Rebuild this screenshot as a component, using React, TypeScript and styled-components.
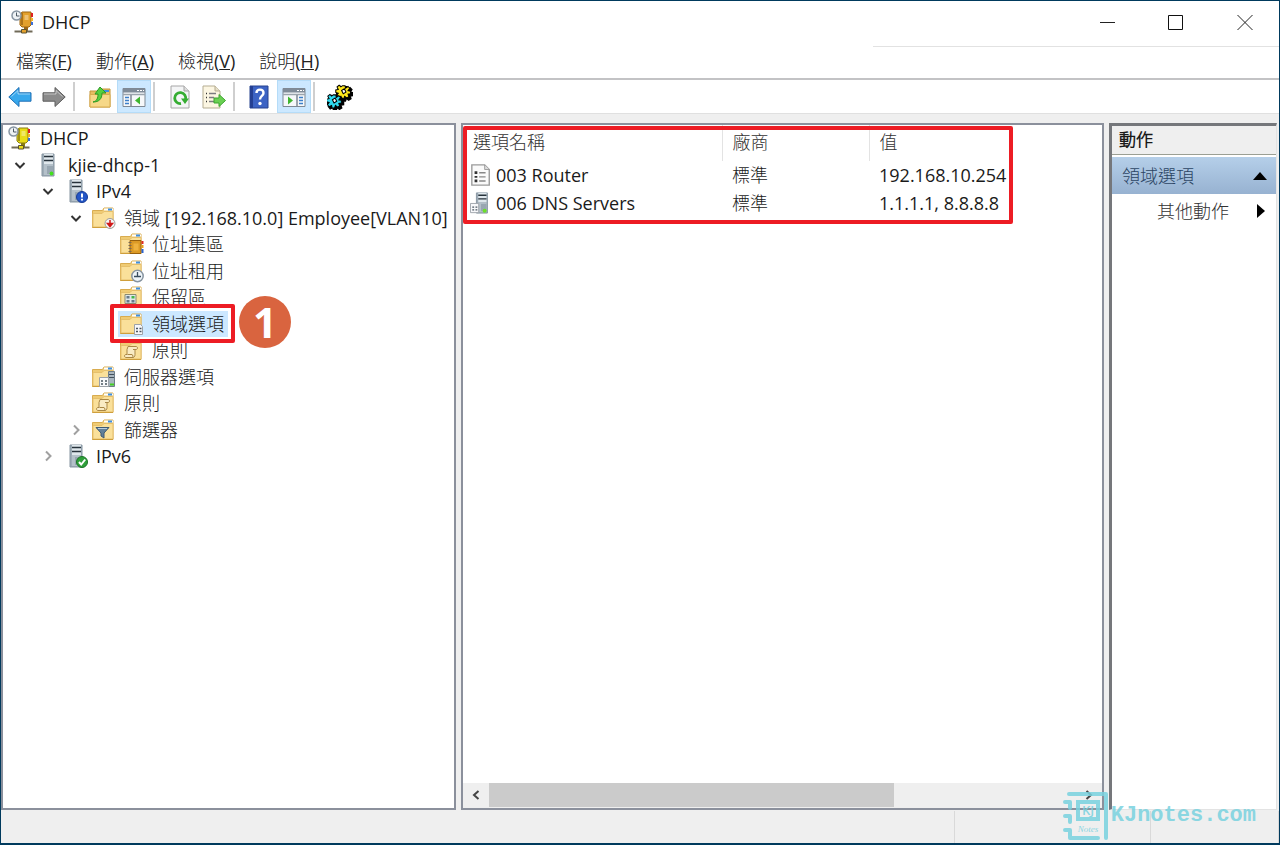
import React from "react";
import styled, { createGlobalStyle, css } from "styled-components";

const GlobalStyle = createGlobalStyle`
  *, *::before, *::after { box-sizing: border-box; }
  body {
    margin: 0;
    background: #efefef;
    color: #1a1a1a;
    font-family: "Open Sans", "Noto Sans CJK TC Light", "Noto Sans CJK TC DemiLight", "Noto Sans CJK TC", sans-serif;
    font-size: 18px;
    line-height: 26px;
  }
  button {
    font: inherit;
    color: inherit;
    border: 0;
    padding: 0;
    background: transparent;
  }
  svg { display: block; flex: none; }
`;

const Window = styled.div`
  display: flex;
  flex-direction: column;
  min-height: 100vh;
  border: 1px solid #003a5d;
  border-bottom-width: 2px;
`;

/* ---------- title and menu ---------- */

const TitleBar = styled.header`
  display: flex;
  align-items: center;
  justify-content: space-between;
  height: 45px;
  padding: 0 0 3px 10px;
  background: #fff;
`;

const Title = styled.h1`
  display: flex;
  align-items: center;
  gap: 7px;
  margin: 0;
  font-size: 18px;
  font-weight: 400;
`;

const Captions = styled.div`
  display: flex;
  align-self: stretch;
`;

const CaptionButton = styled.button`
  display: flex;
  align-items: center;
  justify-content: center;
  width: 69px;
`;

const MenuBar = styled.nav`
  display: flex;
  gap: 24px;
  height: 32px;
  padding: 1px 15px 0;
  background: linear-gradient(#e2e2e2, #e2e2e2) right top / 406px 1px no-repeat #fff;
`;

const MenuButton = styled.button`
  height: 28px;
  color: #222;
`;

/* ---------- toolbar ---------- */

const Toolbar = styled.div`
  display: flex;
  height: 36px;
  padding-left: 2px;
  border-top: 2px solid #c3c3c5;
  border-bottom: 1px solid #e0e0e0;
  background: #fff;
`;

const ToolButton = styled.button<{ $on?: boolean }>`
  display: flex;
  align-items: center;
  justify-content: center;
  width: 34px;
  ${(p) =>
    p.$on &&
    css`
      background: #cce8ff;
      border: 1px solid #b5dcf8;
    `}
`;

const ToolDivider = styled.span`
  width: 2px;
  margin: 2px 8px 2px 2px;
  background: #cfcfcf;
`;

/* ---------- panels ---------- */

const Panels = styled.main`
  flex: 1;
  display: grid;
  grid-template-columns: 455px minmax(0, 1fr) 168px;
  gap: 5px;
  padding: 9px 2px 0 0;
`;

const Panel = styled.section`
  display: flex;
  flex-direction: column;
  min-width: 0;
  background: #fff;
  border: 2px solid #8b909c;
`;

const ActionPanel = styled(Panel)`
  border-width: 3px 1px 1px 3px;
  border-color: #75777b #e3e3e3 #e3e3e3 #75777b;
`;

/* ---------- tree ---------- */

const Tree = styled.ul`
  margin: 0;
  padding: 0;
  list-style: none;
`;

const TreeItem = styled.li<{ $level: number }>`
  position: relative;
  display: flex;
  align-items: center;
  height: 26px;
  padding-left: ${(p) => (p.$level === 0 ? 5 : p.$level * 28 - 23)}px;

  &:nth-child(even) { height: 27px; }
`;

const Toggle = styled.button`
  display: flex;
  align-items: center;
  justify-content: center;
  width: 24px;
  height: 24px;
  margin-right: 4px;
`;

const TogglePlaceholder = styled.span`
  width: 28px;
`;

const NodeLabel = styled.button<{ $selected?: boolean }>`
  display: flex;
  align-items: center;
  gap: 8px;
  height: 26px;
  padding-right: 4px;
  white-space: nowrap;
  ${(p) =>
    p.$selected &&
    css`
      background: #cce8ff;
      box-shadow: -2px 0 #cce8ff;
    `}
`;

const RedFrame = styled.div`
  position: absolute;
  z-index: 2;
  border: 4px solid #ed1c24;
  border-radius: 2px;
  pointer-events: none;
`;

const TreeFrame = styled(RedFrame)`
  top: -6px;
  left: 107px;
  width: 125px;
  height: 39px;
`;

const ListFrame = styled(RedFrame)`
  top: 1px;
  left: 0;
  width: 550px;
  height: 98px;
`;

const StepBadge = styled.span`
  position: absolute;
  z-index: 3;
  top: -14px;
  left: 236px;
  display: flex;
  align-items: center;
  justify-content: center;
  width: 52px;
  height: 52px;
  border-radius: 50%;
  background: #d9643f;
  color: #fff;
  font-size: 42px;
  font-weight: 700;
`;

/* ---------- option list ---------- */

const ListArea = styled.div`
  position: relative;
  flex: 1;
`;

const OptionTable = styled.table`
  width: 100%;
  table-layout: fixed;
  border-collapse: collapse;
  text-align: left;
  white-space: nowrap;

  th {
    height: 36px;
    padding: 0 0 2px 10px;
    font-weight: 400;
    color: #333;
    border-right: 1px solid #e3e3e3;
  }
  th:last-child { border-right: 0; }
  td {
    height: 28px;
    padding: 0 0 0 10px;
  }
  td:first-child { padding-left: 7px; }
`;

const OptionName = styled.span`
  display: flex;
  align-items: center;
  gap: 4px;
`;

const ScrollBar = styled.div`
  display: flex;
  height: 25px;
  padding-bottom: 1px;
  background: #efefef;
`;

const ScrollButton = styled.button`
  display: flex;
  align-items: center;
  justify-content: center;
  width: 26px;
`;

const ScrollTrack = styled.div`
  flex: 1;
`;

const ScrollThumb = styled.div`
  width: 69%;
  height: 100%;
  background: #cbcbcb;
`;

/* ---------- actions ---------- */

const ActionTitle = styled.h2`
  height: 29px;
  margin: 0;
  padding-left: 7px;
  font-size: 17px;
  font-weight: 700;
  line-height: 28px;
  background: #efefef;
  border-bottom: 1px solid #9b9f94;
`;

const ActionGroup = styled.button`
  display: flex;
  align-items: center;
  justify-content: space-between;
  height: 37px;
  margin-top: 2px;
  padding: 0 9px 0 10px;
  color: #2c4564;
  background: linear-gradient(#b5cfe9, #97b2d1);
`;

const ActionItem = styled.button`
  display: flex;
  align-items: center;
  justify-content: space-between;
  height: 34px;
  padding: 0 11px 0 45px;
  color: #333;
`;

/* ---------- status bar ---------- */

const StatusBar = styled.footer`
  position: relative;
  display: grid;
  grid-template-columns: minmax(0, 1fr) 196px 128px;
  height: 33px;
  padding-top: 1px;
`;

const StatusCell = styled.span`
  border-right: 1px solid #d9d9d9;
`;

const Watermark = styled.div`
  position: absolute;
  z-index: 4;
  right: 23px;
  bottom: 1px;
  display: flex;
  align-items: center;
  color: #79d2df;
  opacity: 0.85;
  font: 700 22px/30px "Liberation Mono", monospace;
`;

/* ---------- drawings ---------- */

const Svg = ({ size = 24, children }: { size?: number; children: React.ReactNode }) => (
  <svg width={size} height={size} viewBox="0 0 24 24" aria-hidden="true">
    {children}
  </svg>
);

const DhcpIcon = ({ body, edge }: { body: string; edge: string }) => (
  <Svg>
    <path d="M9 5l2-3h9v13l-2 2h-7l-2-2z" fill={body} stroke={edge} />
    <path d="M11 3v12" stroke={edge} strokeWidth="1.500" />
    <path d="M13.500 5h4v5h-4z" fill="#fff" fillOpacity=".35" />
    <path d="M20 3h2v4h-2z" fill="#e02020" />
    <path d="M20 8h2v3h-2z" fill="#f0b428" />
    <path d="M20 12h2v3h-2z" fill="#3a6fd8" />
    <path d="M13 17h4v4h-4z" fill={edge} />
    <path d="M3.500 21.500h18" stroke="#706a58" strokeWidth="2" />
    <path d="M10.500 19.500h5v3.500h-5z" fill={body} stroke="#5b5330" />
    <circle cx="5.500" cy="5.500" r="4.500" fill="#eef2f5" stroke="#8795a2" strokeWidth="1.500" />
    <path d="M5.500 2.500v3.500h3" fill="none" stroke="#4c5964" />
  </Svg>
);

const Tower = ({ x = 5 }: { x?: number }) => (
  <g transform={`translate(${x} 0)`}>
    <path d="M1 1h12v22H1z" fill="#9eacb7" stroke="#8695a1" />
    <path d="M3 1h9v10H3z" fill="#dfe7ec" />
    <path d="M3 11h9v11H3z" fill="#b4c0c9" />
    <path d="M3 3.500h9M3 7.500h9" stroke="#27323b" strokeWidth="1.500" />
    <path d="M6 13h6v8H6z" fill="#98a6b1" />
  </g>
);

const ServerIcon = () => (
  <Svg>
    <Tower />
    <circle cx="15.500" cy="20.500" r="1.900" fill="#43e01c" />
  </Svg>
);

const ServerInfoIcon = () => (
  <Svg>
    <Tower />
    <circle cx="18" cy="18" r="5.500" fill="#2456c6" stroke="#173c96" />
    <path d="M18 14.500v4M18 19.800v1.700" stroke="#fff" strokeWidth="2" />
  </Svg>
);

const ServerOkIcon = () => (
  <Svg>
    <Tower />
    <circle cx="18" cy="18" r="5.500" fill="#2fa03a" stroke="#1c7427" />
    <path d="M15 18l2.200 2.500 4-5" fill="none" stroke="#fff" strokeWidth="2" />
  </Svg>
);

const Folder = () => (
  <>
    <path d="M.500 4.500h10l1.500-2.500h9v19.500H.500z" fill="#efcb74" stroke="#d9ac50" />
    <path d="M12 3.500h9" stroke="#fff" strokeWidth="2" />
    <path d="M16 3.500h4" stroke="#3f8fe0" strokeWidth="2" />
    <path d="M1 7.500h9l2-2h9v15.500H1z" fill="#fae09a" stroke="#e6c06c" />
    <path d="M.500 21.500h20.500" stroke="#cf9f3c" />
  </>
);

const FolderIcon = ({ children }: { children?: React.ReactNode }) => (
  <Svg>
    <Folder />
    {children}
  </Svg>
);

const ScopeBadge = () => (
  <>
    <circle cx="18" cy="17.500" r="5" fill="#f4f4f4" stroke="#9b9b9b" />
    <path d="M18 14v6M15.500 17.500L18 20.500l2.500-3z" fill="#d01818" stroke="#d01818" strokeWidth="1.500" />
  </>
);

const BookBadge = () => (
  <>
    <path d="M10 8.500h11v13H10z" fill="#dc9a26" stroke="#99610c" />
    <path d="M8.500 10.500h3M8.500 13.500h3M8.500 16.500h3M8.500 19.500h3" stroke="#7b6a55" />
    <path d="M13.500 11.500h5v7h-5z" fill="#efb23e" />
    <path d="M22.500 9v3" stroke="#e02a20" strokeWidth="2" />
    <path d="M22.500 13v3" stroke="#e8a11c" strokeWidth="2" />
    <path d="M22.500 17v4" stroke="#2b63cf" strokeWidth="2" />
  </>
);

const ClockBadge = () => (
  <>
    <circle cx="17.500" cy="17" r="5.700" fill="#eef4f8" stroke="#8794a0" strokeWidth="1.500" />
    <path d="M17.500 13v4.500h3.500M14 17.500h3" fill="none" stroke="#394d5e" strokeWidth="1.300" />
  </>
);

const ReserveBadge = () => (
  <>
    <path d="M5 9.500h11v9H5z" fill="#dfe8ea" stroke="#8a8a72" />
    <path d="M6.500 11h3v2.500h-3zM6.500 15h3v2.500h-3zM11.500 15h3v2.500h-3z" fill="#66798a" />
    <path d="M11.500 11h3v2.500h-3z" fill="#42b649" />
  </>
);

const ListBadge = () => (
  <>
    <path d="M14.500 12.500h6l2 2v8h-8z" fill="#f7f8fa" stroke="#9da2a8" />
    <path d="M16 16.500h2M19.500 16.500h2M16 19.500h2M19.500 19.500h2" stroke="#4a5560" strokeWidth="1.500" />
  </>
);

const PolicyBadge = () => (
  <>
    <path d="M8 8.500h8c2 0 2 3 0 3h-1v5c0 2-1 3-2 3H6c-2 0-2-3 0-3h1v-5z" fill="#f9ebc4" stroke="#a98746" />
    <path d="M13 11.500h2M7.500 16.500h4.500c1 0 1 3 1 3" fill="none" stroke="#a98746" />
  </>
);

const ServerListBadge = () => (
  <>
    <path d="M16.500 6.500h6v15h-6z" fill="#a9b6c0" stroke="#6e7d88" />
    <path d="M17 9.500h5M17 12.500h5" stroke="#43505b" />
    <path d="M18 19.500h4" stroke="#43d022" strokeWidth="2" />
    <path d="M7.500 12.500h9v9h-9z" fill="#f7f8fa" stroke="#9da2a8" />
    <path d="M9 16h2M13 16h2M9 19h2M13 19h2" stroke="#4a5560" strokeWidth="1.500" />
  </>
);

const FunnelBadge = () => (
  <>
    <path d="M4 9.500h13l-5 5.500v5l-3-2v-3z" fill="#62809a" stroke="#405b74" />
    <path d="M6 10.500h9" stroke="#b9cddd" />
  </>
);

const Chevron = ({ open }: { open: boolean }) => (
  <svg width="12" height="12" viewBox="0 0 12 12" aria-hidden="true">
    <path
      d={open ? "M1.500 4L6 8.500 10.500 4" : "M4 1.500L8.500 6 4 10.500"}
      fill="none"
      stroke={open ? "#333" : "#a0a0a0"}
      strokeWidth="2"
    />
  </svg>
);

const ArrowIcon = ({ flip, fill, edge }: { flip?: boolean; fill: string; edge: string }) => (
  <Svg>
    <g transform={flip ? "translate(24 0) scale(-1 1)" : undefined}>
      <path d="M.800 12L11 2.500v5.300h12v8.400H11v5.300z" fill={fill} stroke={edge} strokeLinejoin="round" />
      <path d="M3.500 11.500L10 5.500v3.500h12" fill="none" stroke="#fff" strokeOpacity=".5" />
    </g>
  </Svg>
);

const UpFolderIcon = () => (
  <Svg>
    <path d="M2 6h8l2-2h10v18H2z" fill="#e6bd62" stroke="#c4953b" />
    <path d="M16 6h5" stroke="#3f8fe0" strokeWidth="2" />
    <path d="M2 9.500h20V22H2z" fill="#f6d888" stroke="#d8ac4e" />
    <path d="M5 17c4-1 5-4 5-8H7l5-7 6 6h-4c0 6-3 9-9 9z" fill="#56cf3e" stroke="#2d9a24" />
  </Svg>
);

const PaneIcon = ({ right }: { right?: boolean }) => (
  <Svg>
    <path d="M1 3.500h22v18H1z" fill="#f6f8fa" stroke="#7f8994" />
    <path d="M1 4h22v3.500H1z" fill="#7f8b98" />
    <path d="M15 5.500h2M18 5.500h2M21 5.500h1" stroke="#fff" />
    <path d="M1 9.500h22" stroke="#9ba4ad" strokeWidth="1.500" />
    <g transform={right ? "translate(24 0) scale(-1 1)" : undefined}>
      <path d="M9 10v11" stroke="#7f8994" strokeWidth="1.500" />
      <path d="M3 12.500h4M3 15.500h4M3 18.500h4" stroke="#3c7fca" strokeWidth="1.500" />
      <path d="M18 11.500v8l-5-4z" fill="#3fb52f" />
    </g>
  </Svg>
);

const RefreshIcon = () => (
  <Svg>
    <path d="M3 1h13l5 5v17H3z" fill="#f4f5f6" stroke="#a6a6a6" />
    <path d="M16 1v5h5" fill="#ddd" stroke="#a6a6a6" />
    <path d="M13 18.500a5.500 5.500 0 1 1 4.500-4" fill="none" stroke="#35ad32" strokeWidth="2.800" />
    <path d="M13 13.500h8l-4 5.500z" fill="#35ad32" />
  </Svg>
);

const ExportIcon = () => (
  <Svg>
    <path d="M1 1h12l5 5v17H1z" fill="#fcf6e2" stroke="#b5ad92" />
    <path d="M13 1v5h5" fill="#e6dfc8" stroke="#b5ad92" />
    <path d="M4 8.500h1M4 12.500h1M4 16.500h1" stroke="#333" strokeWidth="1.500" />
    <path d="M7 8.500h7M7 12.500h5M7 16.500h5" stroke="#7b7b80" strokeWidth="1.500" />
    <path d="M12 13h5V9.500l6.500 6-6.500 6V18h-5z" fill="#6ad052" stroke="#3ba52e" />
  </Svg>
);

const HelpIcon = () => (
  <Svg>
    <path d="M2 1h18v22H2z" fill="#3c63c4" stroke="#27428f" />
    <path d="M2 1h3v22H2z" fill="#243f92" />
    <path d="M8.500 8c0-4.500 7-4.500 7 0 0 3-3.500 3-3.500 6.500" fill="none" stroke="#fff" strokeWidth="2.400" />
    <circle cx="12" cy="18.500" r="1.700" fill="#fff" />
  </Svg>
);

const GEAR = "M-1.500-7h3l.5 3 3-2 2 2-2 3 3 .5v3l-3 .5 1 3-2.500 1.500-2.500-2-1 3h-3l-.5-3-3 1.500-2-2.500 2-2.500-3-1v-3l3-.5-1.500-3 2.500-2 2 2z";

const Gear = ({ x, y, fill }: { x: number; y: number; fill: string }) => (
  <g transform={`translate(${x} ${y})`}>
    <path d={GEAR} transform="translate(1.500 1.500) scale(.85)" fill="#000" stroke="#000" strokeWidth="1.500" />
    <path d={GEAR} transform="scale(.78)" fill={fill} stroke="#000" strokeWidth="1.200" />
    <path d="M-2-1l2.500-1.500L2 .5-.5 2z" fill="#fff" stroke="#000" strokeWidth="1" />
  </g>
);

const GearsIcon = () => (
  <Svg size={26}>
    <Gear x={15.5} y={7} fill="#ffe81c" />
    <Gear x={7} y={15.5} fill="#2fd9ee" />
  </Svg>
);

const PageIcon = () => (
  <Svg size={22}>
    <path d="M2 1h14l5 5v17H2z" fill="#fafafa" stroke="#9a9a9a" strokeWidth="1.500" />
    <path d="M16 1v5h5" fill="#ddd" stroke="#9a9a9a" />
    <path d="M5 8h3v3H5zM5 13h3v2H5zM5 17h3v3H5z" fill="#333" />
    <path d="M10 9.500h7M10 14h7M10 18.500h7" stroke="#888" strokeWidth="1.500" />
  </Svg>
);

const DnsIcon = () => (
  <Svg size={22}>
    <Tower x={6} />
    <circle cx="16" cy="20.500" r="2.200" fill="#6be028" />
    <path d="M.500 12.500h9v10h-9z" fill="#f7f8fa" stroke="#9da2a8" />
    <path d="M2.500 16.500h2M6 16.500h2M2.500 19.500h2M6 19.500h2" stroke="#4a5560" strokeWidth="1.500" />
  </Svg>
);

const LogoText = styled.text`
  fill: #79d2df;
  text-anchor: middle;
`;

const LogoInitials = styled(LogoText)`
  font: 600 13px "Open Sans", sans-serif;
`;

const LogoScript = styled(LogoText)`
  font: italic 400 9px "Liberation Serif", serif;
`;

const WatermarkLogo = () => (
  <svg width="48" height="52" viewBox="0 0 48 52" aria-hidden="true">
    <g fill="none" stroke="#79d2df" strokeWidth="4" strokeLinecap="round" strokeLinejoin="round">
      <path d="M6 4h37v44" />
      <path d="M2 12h5v6M2 26h5v6M2 40h5v8h28" />
      <rect x="15" y="12" width="20" height="17" strokeLinejoin="miter" />
    </g>
    <LogoInitials x="25" y="25">KJ</LogoInitials>
    <LogoScript x="25" y="42">Notes</LogoScript>
  </svg>
);

/* ---------- data ---------- */

type Node = {
  level: number;
  label: string;
  icon: React.ReactNode;
  open?: boolean;
  selected?: boolean;
};

const folder = (badge: React.ReactNode) => <FolderIcon>{badge}</FolderIcon>;

const nodes: Node[] = [
  { level: 0, label: "DHCP", icon: <DhcpIcon body="#e8dc18" edge="#8a7d10" /> },
  { level: 1, label: "kjie-dhcp-1", icon: <ServerIcon />, open: true },
  { level: 2, label: "IPv4", icon: <ServerInfoIcon />, open: true },
  { level: 3, label: "領域 [192.168.10.0] Employee[VLAN10]", icon: folder(<ScopeBadge />), open: true },
  { level: 4, label: "位址集區", icon: folder(<BookBadge />) },
  { level: 4, label: "位址租用", icon: folder(<ClockBadge />) },
  { level: 4, label: "保留區", icon: folder(<ReserveBadge />) },
  { level: 4, label: "領域選項", icon: folder(<ListBadge />), selected: true },
  { level: 4, label: "原則", icon: folder(<PolicyBadge />) },
  { level: 3, label: "伺服器選項", icon: folder(<ServerListBadge />) },
  { level: 3, label: "原則", icon: folder(<PolicyBadge />) },
  { level: 3, label: "篩選器", icon: folder(<FunnelBadge />), open: false },
  { level: 2, label: "IPv6", icon: <ServerOkIcon />, open: false },
];

const menus = [
  ["檔案", "F"],
  ["動作", "A"],
  ["檢視", "V"],
  ["說明", "H"],
];

const options = [
  { name: "003 Router", vendor: "標準", value: "192.168.10.254", icon: <PageIcon /> },
  { name: "006 DNS Servers", vendor: "標準", value: "1.1.1.1, 8.8.8.8", icon: <DnsIcon /> },
];

export default function App() {
  return (
    <>
      <GlobalStyle />
      <Window>
        <TitleBar>
          <Title>
            <DhcpIcon body="#e3a02c" edge="#9c6512" />
            DHCP
          </Title>
          <Captions>
            <CaptionButton aria-label="最小化">
              <svg width="16" height="16"><path d="M1 8.500h15" stroke="#222" /></svg>
            </CaptionButton>
            <CaptionButton aria-label="最大化">
              <svg width="16" height="16"><path d="M.500 1.500h14v14H.500z" fill="none" stroke="#111" /></svg>
            </CaptionButton>
            <CaptionButton aria-label="關閉">
              <svg width="16" height="16"><path d="M.500 1l15 15M15.500 1L.500 16" stroke="#222" /></svg>
            </CaptionButton>
          </Captions>
        </TitleBar>

        <MenuBar>
          {menus.map(([label, key]) => (
            <MenuButton key={key}>
              {label}(<u>{key}</u>)
            </MenuButton>
          ))}
        </MenuBar>

        <Toolbar role="toolbar">
          <ToolButton aria-label="上一頁"><ArrowIcon fill="#38a8ec" edge="#1f6fb4" /></ToolButton>
          <ToolButton aria-label="下一頁"><ArrowIcon flip fill="#8b8b8b" edge="#5c5c5c" /></ToolButton>
          <ToolDivider />
          <ToolButton aria-label="上一層"><UpFolderIcon /></ToolButton>
          <ToolButton $on aria-label="主控台樹狀目錄"><PaneIcon /></ToolButton>
          <ToolDivider />
          <ToolButton aria-label="重新整理"><RefreshIcon /></ToolButton>
          <ToolButton aria-label="匯出清單"><ExportIcon /></ToolButton>
          <ToolDivider />
          <ToolButton aria-label="說明"><HelpIcon /></ToolButton>
          <ToolButton $on aria-label="動作窗格"><PaneIcon right /></ToolButton>
          <ToolDivider />
          <ToolButton aria-label="設定選項"><GearsIcon /></ToolButton>
        </Toolbar>

        <Panels>
          <Panel>
            <Tree role="tree">
              {nodes.map((node, i) => (
                <TreeItem
                  key={i}
                  role="treeitem"
                  aria-level={node.level + 1}
                  aria-expanded={node.open}
                  aria-selected={!!node.selected}
                  $level={node.level}
                >
                  {node.level > 0 &&
                    (node.open === undefined ? (
                      <TogglePlaceholder />
                    ) : (
                      <Toggle aria-label={node.open ? "摺疊" : "展開"}>
                        <Chevron open={node.open} />
                      </Toggle>
                    ))}
                  <NodeLabel $selected={node.selected}>
                    {node.icon}
                    {node.label}
                  </NodeLabel>
                  {node.selected && (
                    <>
                      <TreeFrame />
                      <StepBadge>1</StepBadge>
                    </>
                  )}
                </TreeItem>
              ))}
            </Tree>
          </Panel>

          <Panel>
            <ListArea>
              <OptionTable>
                <colgroup>
                  <col style={{ width: 259 }} />
                  <col style={{ width: 147 }} />
                  <col />
                </colgroup>
                <thead>
                  <tr>
                    <th scope="col">選項名稱</th>
                    <th scope="col">廠商</th>
                    <th scope="col">值</th>
                  </tr>
                </thead>
                <tbody>
                  {options.map((option) => (
                    <tr key={option.name}>
                      <td>
                        <OptionName>
                          {option.icon}
                          {option.name}
                        </OptionName>
                      </td>
                      <td>{option.vendor}</td>
                      <td>{option.value}</td>
                    </tr>
                  ))}
                </tbody>
              </OptionTable>
              <ListFrame />
            </ListArea>
            <ScrollBar>
              <ScrollButton aria-label="向左捲動">
                <svg width="10" height="10"><path d="M7.500 1L3 5l4.500 4" fill="none" stroke="#444" strokeWidth="2" /></svg>
              </ScrollButton>
              <ScrollTrack><ScrollThumb /></ScrollTrack>
              <ScrollButton aria-label="向右捲動">
                <svg width="10" height="10"><path d="M2.500 1L7 5 2.500 9" fill="none" stroke="#444" strokeWidth="2" /></svg>
              </ScrollButton>
            </ScrollBar>
          </Panel>

          <ActionPanel>
            <ActionTitle>動作</ActionTitle>
            <ActionGroup>
              領域選項
              <svg width="14" height="8"><path d="M0 8L7 0l7 8z" fill="#000" /></svg>
            </ActionGroup>
            <ActionItem>
              其他動作
              <svg width="8" height="14"><path d="M0 0l8 7-8 7z" fill="#000" /></svg>
            </ActionItem>
          </ActionPanel>
        </Panels>

        <StatusBar>
          <StatusCell />
          <StatusCell />
          <StatusCell />
          <Watermark>
            <WatermarkLogo />
            KJnotes.com
          </Watermark>
        </StatusBar>
      </Window>
    </>
  );
}
